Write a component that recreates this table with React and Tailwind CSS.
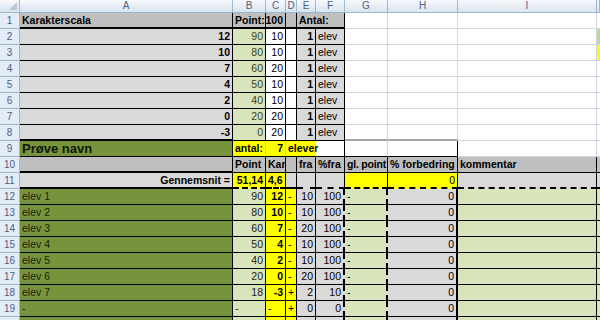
const COLS = "grid-cols-[20px_213px_33px_20px_11px_19px_29px_43px_70px_139px_3px]";

// cell fills
const hdr = "bg-[#bfbfbf] border-r border-b border-black font-bold";
const gry = "bg-[#d9d9d9] border-r border-b border-black";
const lgr = "bg-[#d7e4bc] border-r border-b border-black";
const yel = "bg-[#ffff00] border-r border-b border-black";
const olv = "bg-[#77933c] border-r border-b border-black";
const wbl = "bg-white border-r border-b border-black";
const wgr = "bg-white border-r border-b border-[#d0d7e5]";
const dash = "border-b-2 [border-bottom-style:dashed]";
const vdash = "border-r-2 [border-right-style:dashed]";

const scale = [
  ["12", "90", "10"],
  ["10", "80", "10"],
  ["7", "60", "20"],
  ["4", "50", "10"],
  ["2", "40", "10"],
  ["0", "20", "20"],
  ["-3", "0", "20"],
];

const students = [
  ["elev 1", "90", "12", "-", "10", "100", "-", "0"],
  ["elev 2", "80", "10", "-", "10", "100", "-", "0"],
  ["elev 3", "60", "7", "-", "20", "100", "-", "0"],
  ["elev 4", "50", "4", "-", "10", "100", "-", "0"],
  ["elev 5", "40", "2", "-", "10", "100", "-", "0"],
  ["elev 6", "20", "0", "-", "20", "100", "-", "0"],
  ["elev 7", "18", "-3", "+", "2", "10", "-", "0"],
  ["-", "-", "-", "+", "0", "0", "", "0"],
  ["", "", "", "", "0", "0", "", "0"],
];

// text may spill into the next cell when `spill` is set, like Excel does
const Cell = ({ className = "", spill = false, children }) => (
  <div
    className={`flex items-center whitespace-nowrap px-[2px] leading-none ${
      spill ? "relative z-10 overflow-visible" : "overflow-hidden"
    } ${className}`}
  >
    {children}
  </div>
);

const RowNum = ({ n }) => (
  <div className="flex items-center justify-center overflow-hidden bg-[#e4ecf7] border-r border-b border-[#9eb6ce] text-[10px] text-[#4d6185] leading-none">
    {n}
  </div>
);

const ColHead = ({ children }) => (
  <div className="flex items-center justify-center bg-linear-to-b from-[#f7f9fc] to-[#dae3ee] border-r border-b border-[#9eb6ce] text-[10px] text-[#4d6185] leading-none">
    {children}
  </div>
);

export default function App() {
  return (
    <div className="w-[600px] h-[320px] overflow-hidden bg-white font-['Liberation_Sans',Arial,sans-serif] text-[10.5px] text-black">
      <div className={`grid ${COLS} grid-rows-[13px_repeat(20,16px)]`}>
        {/* column letters */}
        <div className="flex items-end justify-end bg-linear-to-b from-[#f7f9fc] to-[#dae3ee] border-r border-b border-[#9eb6ce] p-[2px]">
          <svg width="8" height="8" viewBox="0 0 8 8">
            <polygon points="8,0 8,8 0,8" fill="#b7c6d8" />
          </svg>
        </div>
        {["A", "B", "C", "D", "E", "F", "G", "H", "I", ""].map((l, i) => (
          <ColHead key={i}>{l}</ColHead>
        ))}

        {/* row 1 */}
        <RowNum n={1} />
        <Cell className={`${hdr} border-b-2`}>Karakterscala</Cell>
        <Cell className={`${hdr} border-b-2`}>Point:</Cell>
        <Cell className={`${hdr} border-b-2 justify-end`}>100</Cell>
        <Cell className={`${hdr} border-b-2`} />
        <Cell className={`${hdr} border-b-2 col-span-2`}>Antal:</Cell>
        <Cell className={wgr} />
        <Cell className={wgr} />
        <Cell className={wgr} />
        <Cell className={wgr} />

        {/* rows 2-8: grade scale */}
        {scale.map(([grade, pts, gap], i) => (
          <div key={grade} className="contents">
            <RowNum n={i + 2} />
            <Cell className={`${gry} justify-end font-bold ${i === 6 ? "border-b-2" : ""}`}>
              {grade}
            </Cell>
            <Cell className={`${lgr} justify-end text-[#38431f]`}>{pts}</Cell>
            <Cell className={`${wbl} justify-end`}>{gap}</Cell>
            <Cell className={wbl} />
            <Cell className={`${gry} justify-end font-bold`}>1</Cell>
            <Cell className={gry}>elev</Cell>
            <Cell className={`${wgr} ${i === 6 ? "border-b-2 border-b-[#a6a6a6]" : ""}`} />
            <Cell className={`${wgr} ${i === 6 ? "border-b-2 border-b-[#a6a6a6]" : ""}`} />
            <Cell className={wgr} />
            <Cell
              className={
                i === 0
                  ? "bg-[#c4d79b] border-b border-[#d0d7e5]"
                  : i === 1
                  ? "bg-[#ffff00] border-b border-[#d0d7e5]"
                  : "bg-white border-b border-[#d0d7e5]"
              }
            />
          </div>
        ))}

        {/* row 9: test name */}
        <RowNum n={9} />
        <Cell className={`${olv} text-[13px] font-bold text-[#10180a]`}>Prøve navn</Cell>
        <Cell className={`${yel} border-r-[#e6e600] font-bold`}>antal:</Cell>
        <Cell className={`${yel} border-r-[#e6e600] justify-end font-bold`}>7</Cell>
        <Cell spill className={`${yel} border-r-[#ffff00] col-span-2 font-bold`}>elever</Cell>
        <Cell className={wbl} />
        <Cell className="bg-white border-r border-b border-black border-r-[#d0d7e5]" />
        <Cell className={wbl} />
        <Cell className={wgr} />
        <Cell className={wgr} />

        {/* row 10: headers */}
        <RowNum n={10} />
        <Cell className={`${hdr} border-b-2`} />
        <Cell className={hdr}>Point</Cell>
        <Cell className={hdr}>Kar</Cell>
        <Cell className={hdr} />
        <Cell className={hdr}>fra</Cell>
        <Cell className={hdr}>%fra</Cell>
        <Cell spill className={`${hdr} tracking-[-0.2px]`}>gl. point</Cell>
        <Cell className={hdr}>% forbedring</Cell>
        <Cell className={hdr}>kommentar</Cell>
        <Cell className="bg-[#bfbfbf] border-b border-black" />

        {/* row 11: average */}
        <RowNum n={11} />
        <Cell className={`${gry} border-b-2 justify-end font-bold`}>Gennemsnit =</Cell>
        <Cell className={`${yel} ${dash} justify-end font-bold`}>51,14</Cell>
        <Cell className={`${yel} ${dash} font-bold`}>4,6</Cell>
        <Cell className={`${gry} ${dash}`} />
        <Cell className={`${gry} ${dash}`} />
        <Cell className={`${gry} ${dash}`} />
        <Cell className={`${yel} ${dash}`} />
        <Cell className={`${yel} ${dash} justify-end`}>0</Cell>
        <Cell className={`${gry} ${dash}`} />
        <Cell className={`bg-[#d9d9d9] border-black ${dash}`} />

        {/* rows 12-20: students */}
        {students.map((s, i) => (
          <div key={i} className="contents">
            <RowNum n={i + 12} />
            <Cell className={`${olv} text-[#17230a]`}>{s[0]}</Cell>
            <Cell className={`${lgr} ${s[1] === "-" ? "" : "justify-end"} text-[#222]`}>{s[1]}</Cell>
            <Cell className={`${yel} ${s[2] === "-" ? "" : "justify-end font-bold"}`}>{s[2]}</Cell>
            <Cell className={yel}>{s[3]}</Cell>
            <Cell className={`${gry} justify-end`}>{s[4]}</Cell>
            <Cell className={`${gry} ${vdash} justify-end`}>{s[5]}</Cell>
            <Cell className={`${lgr} ${vdash}`}>{s[6]}</Cell>
            <Cell className={`${gry} border-r-2 justify-end`}>{s[7]}</Cell>
            <Cell className={lgr} />
            <Cell className="bg-[#d7e4bc] border-b border-black" />
          </div>
        ))}
      </div>
    </div>
  );
}
